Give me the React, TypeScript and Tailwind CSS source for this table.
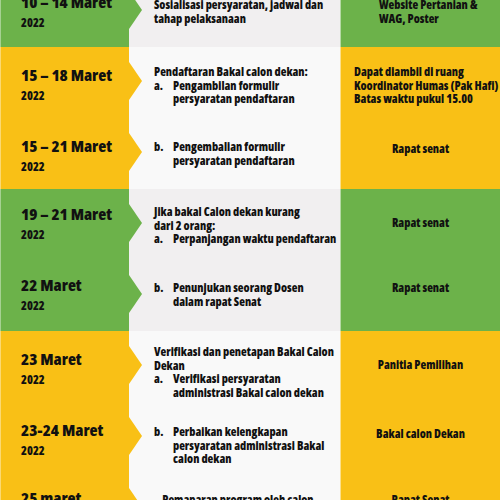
type Item = { mark: string; lines: string[] };

type Row = {
  band: "green" | "yellow";
  title: string;
  lead?: string[];
  item?: Item;
  right: string[];
  rightAlign: string;
  lt: string;
  mt: string;
  rt: string;
};

const rows: Row[] = [
  {
    band: "green",
    title: "10 – 14 Maret",
    lead: ["Sosialisasi persyaratan, jadwal dan", "tahap pelaksanaan"],
    right: ["Website Pertanian &", "WAG, Poster"],
    rightAlign: "pl-[38px]",
    lt: "pt-[16px]",
    mt: "pt-[22px]",
    rt: "pt-[22px]",
  },
  {
    band: "yellow",
    title: "15 – 18 Maret",
    lead: ["Pendaftaran Bakal calon dekan:"],
    item: { mark: "a.", lines: ["Pengambilan formulir", "persyaratan pendaftaran"] },
    right: ["Dapat diambil di ruang", "Koordinator Humas (Pak Hafi)", "Batas waktu pukul 15.00"],
    rightAlign: "pl-[13px]",
    lt: "pt-[18px]",
    mt: "pt-[18px]",
    rt: "pt-[18px]",
  },
  {
    band: "yellow",
    title: "15 – 21 Maret",
    item: { mark: "b.", lines: ["Pengembalian formulir", "persyaratan pendaftaran"] },
    right: ["Rapat senat"],
    rightAlign: "text-center",
    lt: "pt-[18px]",
    mt: "pt-[22px]",
    rt: "pt-[24px]",
  },
  {
    band: "green",
    title: "19 – 21 Maret",
    lead: ["Jika bakal Calon dekan kurang", "dari 2 orang:"],
    item: { mark: "a.", lines: ["Perpanjangan waktu pendaftaran"] },
    right: ["Rapat senat"],
    rightAlign: "text-center",
    lt: "pt-[15px]",
    mt: "pt-[16px]",
    rt: "pt-[27px]",
  },
  {
    band: "green",
    title: "22 Maret",
    item: { mark: "b.", lines: ["Penunjukan seorang Dosen", "dalam rapat Senat"] },
    right: ["Rapat senat"],
    rightAlign: "text-center",
    lt: "pt-[15px]",
    mt: "pt-[21px]",
    rt: "pt-[21px]",
  },
  {
    band: "yellow",
    title: "23 Maret",
    lead: ["Verifikasi dan penetapan Bakal Calon", "Dekan"],
    item: { mark: "a.", lines: ["Verifikasi persyaratan", "administrasi Bakal calon dekan"] },
    right: ["Panitia Pemilihan"],
    rightAlign: "text-center",
    lt: "pt-[18px]",
    mt: "pt-[14px]",
    rt: "pt-[27px]",
  },
  {
    band: "yellow",
    title: "23-24 Maret",
    item: {
      mark: "b.",
      lines: ["Perbaikan kelengkapan", "persyaratan administrasi Bakal", "calon dekan"],
    },
    right: ["Bakal calon Dekan"],
    rightAlign: "text-center",
    lt: "pt-[18px]",
    mt: "pt-[23px]",
    rt: "pt-[25px]",
  },
  {
    band: "yellow",
    title: "25 maret",
    lead: ["    Pemaparan program oleh calon", "dekan"],
    right: ["Rapat Senat"],
    rightAlign: "text-center",
    lt: "pt-[15px]",
    mt: "pt-[20px]",
    rt: "pt-[20px]",
  },
];

const Arrow = ({ color }: { color: string }) => (
  <svg
    className="absolute right-[-13px] top-[15px] z-10"
    width="13"
    height="38"
    viewBox="0 0 13 38"
  >
    <path d="M0 0 L13 19 L0 38 Z" fill={color} />
  </svg>
);

const TimelineRow = ({ row }: { row: Row }) => {
  const green = row.band === "green";
  const fill = green ? "#6cb24a" : "#f9c016";
  return (
    <div className="flex h-[71px]">
      <div
        className={`relative w-[129px] shrink-0 border-l border-white/40 pl-[20px] ${row.lt} ${
          green ? "bg-[#6cb24a]" : "bg-[#f9c016]"
        }`}
      >
        <div className="text-[16.5px] leading-[20px] font-extrabold">{row.title}</div>
        <div className="mt-[4px] text-[12px] leading-[14px] font-extrabold">2022</div>
        <Arrow color={fill} />
      </div>
      <div
        className={`w-[211px] shrink-0 overflow-hidden pl-[25px] text-[11.8px] leading-[13.7px] font-extrabold ${row.mt} ${
          green ? "bg-[#f1eff0]" : "bg-[#f9f9f9]"
        }`}
      >
        {row.lead?.map((l) => (
          <div key={l} className="whitespace-pre">
            {l}
          </div>
        ))}
        {row.item && (
          <div className="flex">
            <span className="w-[19px] shrink-0">{row.item.mark}</span>
            <div>
              {row.item.lines.map((l) => (
                <div key={l} className="whitespace-nowrap">
                  {l}
                </div>
              ))}
            </div>
          </div>
        )}
      </div>
      <div
        className={`w-[160px] shrink-0 overflow-hidden border-l border-white/50 text-[11.8px] leading-[13.7px] font-extrabold ${row.rt} ${row.rightAlign} ${
          green ? "bg-[#6cb24a]" : "bg-[#f9c016]"
        }`}
      >
        {row.right.map((l) => (
          <div key={l} className="whitespace-nowrap">
            {l}
          </div>
        ))}
      </div>
    </div>
  );
};

export default function App() {
  return (
    <div className="h-[500px] w-[500px] overflow-hidden bg-white font-['Open_Sans',sans-serif] text-[#111] [font-stretch:75%]">
      <div className="-mt-[24px]">
        {rows.map((r) => (
          <TimelineRow key={r.title} row={r} />
        ))}
      </div>
    </div>
  );
}
